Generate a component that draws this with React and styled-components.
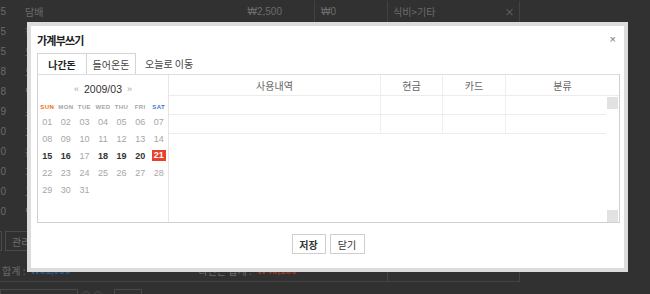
import React from "react";
import styled, { createGlobalStyle } from "styled-components";

const KO = `"Noto Sans CJK KR", "Liberation Sans", sans-serif`;
const NUM = `"Liberation Sans", "Noto Sans CJK KR", sans-serif`;

const GlobalStyle = createGlobalStyle`
  html, body {
    margin: 0;
    padding: 0;
    background: #313131;
  }
  * {
    box-sizing: border-box;
  }
`;

const Page = styled.div`
  position: relative;
  width: 650px;
  height: 294px;
  overflow: hidden;
  background: #313131;
  padding-top: 1px;
  font-family: ${KO};
  color: #6c6c6c;
`;

/* ---------- page behind the dialog ---------- */

const ListRow = styled.div`
  display: grid;
  grid-template-columns: 20px 220px 75px 73px 112px 20px;
  width: 520px;
  height: 20px;
  align-items: center;
  font-size: 10px;
`;

const Cell = styled.div`
  height: 100%;
  display: flex;
  align-items: center;
  padding: 0 ${(p) => p.$pad || 0}px;
  justify-content: ${(p) => p.$align || "flex-start"};
  border-right: ${(p) => (p.$line ? "1px solid #424242" : "none")};
  white-space: nowrap;
  overflow: hidden;
`;

const NumCell = styled(Cell)`
  font-family: ${NUM};
  justify-content: flex-end;
  padding-right: 14px;
`;

const Amount = styled.span`
  font-family: ${NUM};
`;

const Toolbar = styled.div`
  display: flex;
  gap: 3px;
  margin: 10px 0 0 -38px;
  height: 20px;
`;

const PageButton = styled.div`
  width: ${(p) => p.$w}px;
  height: 20px;
  margin-left: ${(p) => p.$ml || 0}px;
  border: 1px solid #4a4a4a;
  font-size: 10px;
  display: flex;
  align-items: center;
  padding-left: 6px;
  color: #6e6e6e;
`;

const Summary = styled.div`
  display: grid;
  grid-template-columns: 388px 132px;
  width: 520px;
  height: 22px;
  margin-top: 9px;
  border-bottom: 1px solid #444;
  font-size: 10px;
`;

const SumCell = styled.div`
  display: flex;
  align-items: center;
  border-right: 1px solid #444;
  padding-left: ${(p) => p.$pad || 0}px;
  white-space: nowrap;
`;

const SumLabel = styled.span`
  margin-left: ${(p) => p.$ml || 0}px;
`;

const Money = styled.span`
  font-family: ${NUM};
  font-weight: bold;
  color: ${(p) => p.$c};
  margin-left: 5px;
`;

const BottomBar = styled.div`
  display: flex;
  align-items: flex-start;
  gap: 4px;
  margin-top: 7px;
`;

const SearchBox = styled.div`
  width: 78px;
  height: 14px;
  border: 1px solid #4a4a4a;
`;

const Dot = styled.div`
  width: 8px;
  height: 8px;
  margin-top: 2px;
  border-radius: 50%;
  border: 1px solid #4a4a4a;
`;

/* ---------- dialog ---------- */

const Dialog = styled.div`
  position: absolute;
  left: 27px;
  top: 22px;
  width: 601px;
  height: 250px;
  background: #fff;
  border: 4px solid #dcdcdc;
  padding: 0 4px 0 6px;
  display: flex;
  flex-direction: column;
  color: #333;
`;

const DialogHead = styled.div`
  height: 27px;
  display: flex;
  align-items: center;
  justify-content: space-between;
  padding-right: 4px;
`;

const Title = styled.h1`
  margin: 0;
  font-size: 11px;
  font-weight: bold;
  letter-spacing: -0.8px;
  color: #222;
`;

const Close = styled.span`
  font-family: ${NUM};
  font-size: 11px;
  color: #777;
  line-height: 1;
`;

const Tabs = styled.div`
  display: flex;
  height: 21px;
  font-size: 10px;
`;

const Tab = styled.div`
  width: 50px;
  display: flex;
  align-items: center;
  justify-content: center;
  border: 1px solid #d4d4d4;
  border-bottom: none;
  margin-left: ${(p) => (p.$first ? 0 : -1)}px;
  font-weight: ${(p) => (p.$active ? "bold" : "normal")};
  color: ${(p) => (p.$active ? "#222" : "#444")};
`;

const TabLink = styled.div`
  display: flex;
  align-items: center;
  padding-left: 9px;
  color: #444;
`;

const Panel = styled.div`
  display: flex;
  height: 149px;
  border: 1px solid #d0d0d0;
  border-top-color: #dedede;
`;

const Calendar = styled.div`
  width: 131px;
  flex-shrink: 0;
  border-right: 1px solid #e6e6e6;
  padding-top: 2px;
`;

const MonthNav = styled.div`
  height: 24px;
  display: flex;
  align-items: center;
  justify-content: center;
  gap: 5px;
  font-family: ${NUM};
  font-size: 10.5px;
  color: #333;
`;

const Arrow = styled.span`
  font-size: 9px;
  color: #aaa;
`;

const DayGrid = styled.div`
  display: grid;
  grid-template-columns: repeat(7, 1fr);
  grid-template-rows: 12px;
  grid-auto-rows: 17px;
  align-items: center;
  justify-items: center;
  font-family: ${NUM};
  font-size: 9px;
`;

const WeekDay = styled.div`
  font-size: 6px;
  font-weight: bold;
  letter-spacing: 0.4px;
  color: ${(p) => p.$c || "#a3a3a3"};
`;

const Day = styled.div`
  color: ${(p) => (p.$strong ? "#333" : "#a6a6a6")};
  font-weight: ${(p) => (p.$strong ? "bold" : "normal")};
`;

const Today = styled.div`
  background: #e8412c;
  color: #fff;
  font-weight: bold;
  padding: 0 2px;
  line-height: 11px;
  height: 11px;
`;

const Ledger = styled.div`
  flex: 1;
  display: flex;
  flex-direction: column;
  min-width: 0;
`;

const HeadRow = styled.div`
  display: grid;
  grid-template-columns: 212px 62px 63px 1fr;
  height: 21px;
  border-bottom: 1px solid #ececec;
  font-size: 10px;
  color: #666;
`;

const HeadCell = styled.div`
  display: flex;
  align-items: center;
  justify-content: center;
  border-right: ${(p) => (p.$last ? "none" : "1px solid #eeeeee")};
`;

const LedgerBody = styled.div`
  flex: 1;
  display: flex;
`;

const Rows = styled.div`
  flex: 1;
`;

const BodyRow = styled.div`
  display: grid;
  grid-template-columns: 212px 62px 63px 1fr;
  height: 19px;
  border-bottom: 1px solid #ececec;
`;

const BodyCell = styled.div`
  border-right: ${(p) => (p.$last ? "none" : "1px solid #efefef")};
`;

const ScrollTrack = styled.div`
  width: 13px;
  display: flex;
  flex-direction: column;
  justify-content: space-between;
  padding: 1px 1px 0 1px;
`;

const ScrollBtn = styled.div`
  width: 11px;
  height: 12px;
  background: #e2e2e2;
`;

const Footer = styled.div`
  display: flex;
  justify-content: center;
  gap: 4px;
  padding-top: 11px;
  padding-right: 1px;
`;

const Button = styled.button`
  width: ${(p) => p.$w}px;
  height: 20px;
  padding: 0;
  background: #fff;
  border: 1px solid #cfcfcf;
  font-family: ${KO};
  font-size: 10px;
  font-weight: ${(p) => (p.$primary ? "bold" : "normal")};
  color: #333;
`;

const rows = [
  ["5", "담배", "₩2,500", "₩0", "식비>기타"],
  ["5", "한식", "₩6,000", "₩0", "식비>외식"],
  ["5", "노래방", "₩10,000", "₩0", "문화>여가"],
  ["8", "노트", "₩1,500", "₩0", "교육>문구"],
  ["8", "담배", "₩2,500", "₩0", "식비>기타"],
  ["9", "소주", "₩3,000", "₩0", "식비>기타"],
  ["0", "고기", "₩12,000", "₩0", "식비>외식"],
  ["0", "음료", "₩1,200", "₩0", "식비>기타"],
  ["0", "기름", "₩0", "₩5,000", "교통>주유"],
  ["0", "그릇", "₩3,400", "₩0", "생활>기타"],
  ["0", "담배", "₩2,500", "₩0", "식비>기타"],
];

const weekDays = [
  ["SUN", "#f26a10"],
  ["MON"],
  ["TUE"],
  ["WED"],
  ["THU"],
  ["FRI"],
  ["SAT", "#3f74d6"],
];

const strongDays = [15, 16, 18, 19, 20];

const App = () => {
  const days = Array.from({ length: 31 }, (_, i) => i + 1);
  return (
    <>
      <GlobalStyle />
      <Page>
        {rows.map((r, i) => (
          <ListRow key={i}>
            <NumCell>{r[0]}</NumCell>
            <Cell $pad={5}>{r[1]}</Cell>
            <Cell $align="flex-end" $pad={32} $line>
              <Amount>{r[2]}</Amount>
            </Cell>
            <Cell $pad={6} $line>
              <Amount>{r[3]}</Amount>
            </Cell>
            <Cell $pad={5}>{r[4]}</Cell>
            <Cell $align="center" $line>×</Cell>
          </ListRow>
        ))}
        <Toolbar>
          <PageButton $w={40}>선택</PageButton>
          <PageButton $w={44}>관리</PageButton>
        </Toolbar>
        <Summary>
          <SumCell $pad={2}>
            합계 :<Money $c="#2f5a8e">₩61,000</Money>
            <SumLabel $ml={128}>나간돈 합계 :</SumLabel>
            <Money $c="#9a3b2e">₩46,100</Money>
          </SumCell>
          <SumCell />
        </Summary>
        <BottomBar>
          <SearchBox />
          <Dot />
          <Dot />
          <PageButton $w={28} $ml={8} />
        </BottomBar>

        <Dialog>
          <DialogHead>
            <Title>가계부쓰기</Title>
            <Close>×</Close>
          </DialogHead>
          <Tabs>
            <Tab $first $active>나간돈</Tab>
            <Tab>들어온돈</Tab>
            <TabLink>오늘로 이동</TabLink>
          </Tabs>
          <Panel>
            <Calendar>
              <MonthNav>
                <Arrow>«</Arrow>
                2009/03
                <Arrow>»</Arrow>
              </MonthNav>
              <DayGrid>
                {weekDays.map(([d, c]) => (
                  <WeekDay key={d} $c={c}>{d}</WeekDay>
                ))}
                {days.map((d) =>
                  d === 21 ? (
                    <Today key={d}>{d}</Today>
                  ) : (
                    <Day key={d} $strong={strongDays.includes(d)}>
                      {String(d).padStart(2, "0")}
                    </Day>
                  )
                )}
              </DayGrid>
            </Calendar>
            <Ledger>
              <HeadRow>
                <HeadCell>사용내역</HeadCell>
                <HeadCell>현금</HeadCell>
                <HeadCell>카드</HeadCell>
                <HeadCell $last>분류</HeadCell>
              </HeadRow>
              <LedgerBody>
                <Rows>
                  {[0, 1].map((i) => (
                    <BodyRow key={i}>
                      <BodyCell />
                      <BodyCell />
                      <BodyCell />
                      <BodyCell $last />
                    </BodyRow>
                  ))}
                </Rows>
                <ScrollTrack>
                  <ScrollBtn />
                  <ScrollBtn />
                </ScrollTrack>
              </LedgerBody>
            </Ledger>
          </Panel>
          <Footer>
            <Button $w={34} $primary>저장</Button>
            <Button $w={35}>닫기</Button>
          </Footer>
        </Dialog>
      </Page>
    </>
  );
};

export default App;
